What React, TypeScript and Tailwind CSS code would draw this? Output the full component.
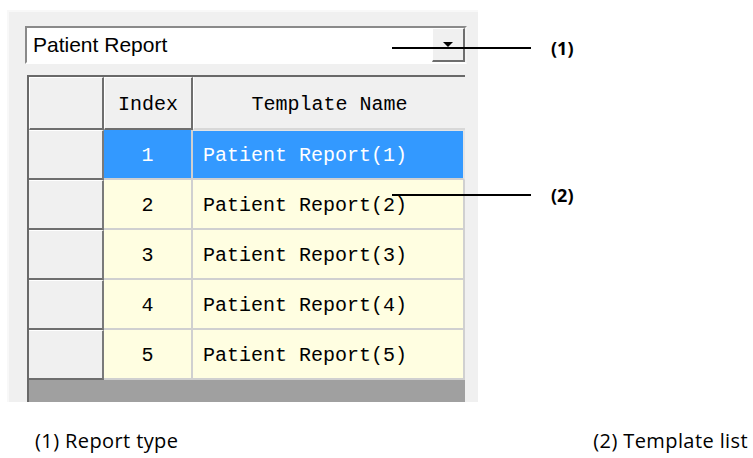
const rows = [1, 2, 3, 4, 5]

function HeaderCell({ w, children }: { w: string; children?: React.ReactNode }) {
  return (
    <div
      className={`${w} h-full flex items-center justify-center pt-[4px] bg-[#f0f0f0] border-t border-l border-white border-r-2 border-b-2 border-r-[#6e6e6e] border-b-[#6e6e6e]`}
    >
      {children}
    </div>
  )
}

function TemplateTable() {
  return (
    <div className="flex flex-col h-full border-t-2 border-l-2 border-[#696969] bg-[#a0a0a0] font-['Liberation_Mono',monospace] text-[20px] text-black">
      <div className="flex h-[53px] shrink-0">
        <HeaderCell w="w-[75px]" />
        <HeaderCell w="w-[89px]">Index</HeaderCell>
        <div className="w-[272px] h-full flex items-center justify-center pt-[4px] bg-[#f0f0f0] border-l border-white border-b-2 border-b-[#d8d8d8]">
          Template Name
        </div>
      </div>
      {rows.map((n) => {
        const selected = n === 1
        return (
          <div key={n} className="flex h-[50px] shrink-0">
            <div className="w-[75px] h-full bg-[#f0f0f0] border-t border-white border-r-2 border-r-[#7a7a7a] border-b-2 border-b-[#6e6e6e]" />
            <div
              className={`w-[89px] h-full flex items-center justify-center pt-[3px] border-r-2 border-b-2 border-[#d0d0d0] ${
                selected ? 'bg-[#3399ff] text-white' : 'bg-[#fffee1]'
              }`}
            >
              {n}
            </div>
            <div
              className={`w-[272px] h-full flex items-center pl-[10px] pt-[3px] border-b-2 border-r-2 border-[#d0d0d0] ${
                selected ? 'bg-[#3399ff] text-white border-t border-t-[#e4e4e4] border-r-[#e4e4e4]' : 'bg-[#fffee1]'
              }`}
            >
              Patient Report({n})
            </div>
          </div>
        )
      })}
    </div>
  )
}

export default function App() {
  return (
    <div className="relative w-[753px] h-[458px] bg-white overflow-hidden">
      <div className="ml-[7px] mt-[10px] w-[471px] h-[392px] bg-[#f0f0f0] border-l-2 border-t-2 border-[#f8f8f8] pl-[16px] pt-[14px] flex flex-col">
        {/* report type combo */}
        <div className="w-[442px] h-[38px] flex border-t-2 border-l-2 border-[#8a8a8a] border-b-2 border-r-2 border-b-white border-r-[#f4f4f4] bg-white">
          <div className="flex-1 flex items-center pl-[6px] font-['Liberation_Sans',sans-serif] text-[21px] text-black">
            Patient Report
          </div>
          <div className="w-[33px] h-full flex items-center justify-center bg-[#f0f0f0] border-t border-l border-white border-r-2 border-b-2 border-r-[#6e6e6e] border-b-[#6e6e6e]">
            <div className="w-0 h-0 border-l-[5px] border-r-[5px] border-t-[5px] border-l-transparent border-r-transparent border-t-black" />
          </div>
        </div>
        <div className="mt-[11px] ml-[2px] w-[438px] flex-1 overflow-hidden">
          <TemplateTable />
        </div>
      </div>

      {/* callouts */}
      <div className="absolute left-[392px] top-[47px] w-[139px] h-[2px] bg-black" />
      <div className="absolute left-[551px] top-[35px] font-['Open_Sans',sans-serif] font-bold text-[18px] text-black">
        (1)
      </div>
      <div className="absolute left-[392px] top-[194px] w-[139px] h-[2px] bg-black" />
      <div className="absolute left-[551px] top-[182px] font-['Open_Sans',sans-serif] font-bold text-[18px] text-black">
        (2)
      </div>

      <div className="flex justify-between pl-[35px] pr-[5px] pt-[24px] font-['Open_Sans',sans-serif] text-[20px] tracking-[0.4px] text-black">
        <span>(1) Report type</span>
        <span>(2) Template list</span>
      </div>
    </div>
  )
}
